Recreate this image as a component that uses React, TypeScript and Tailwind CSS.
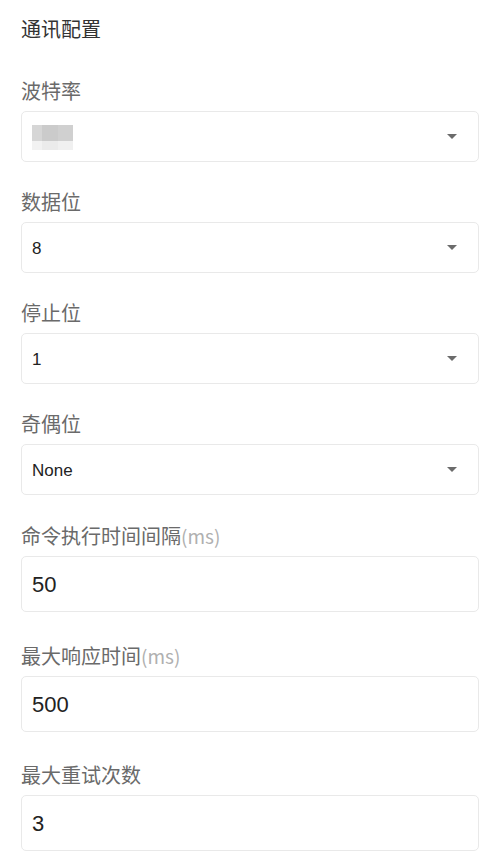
import { ReactNode } from 'react';

const cjk = { fontFamily: '"Noto Sans CJK SC", "Noto Sans", sans-serif' };
const latin = { fontFamily: '"Liberation Sans", "Noto Sans CJK SC", sans-serif' };

function Caret() {
    return (
        <svg width="10" height="5" viewBox="0 0 10 5" className="shrink-0">
            <path d="M0 0 L10 0 L5 5 Z" fill="#6b6b6b" />
        </svg>
    );
}

function Label({ text, unit }: { text: string; unit?: string }) {
    return (
        <div className="text-[20px] leading-[28px] text-[#6a6a6a]" style={cjk}>
            {text}
            {unit && <span className="text-[19px] text-[#b0b0b0]">{unit}</span>}
        </div>
    );
}

function SelectField({ label, children, first }: { label: string; children: ReactNode; first?: boolean }) {
    return (
        <div className={first ? 'mt-[34px]' : 'mt-[26px]'}>
            <Label text={label} />
            <div className="mt-[6px] h-[51px] flex items-center justify-between pl-[10px] pr-[21px] border border-[#e9e9e9] rounded-[5px] bg-white">
                <div className="text-[17px] text-[#222] pt-[2px]" style={latin}>{children}</div>
                <Caret />
            </div>
        </div>
    );
}

function InputField({ label, unit, value, gap }: { label: string; unit?: string; value: string; gap: string }) {
    return (
        <div className={gap}>
            <Label text={label} unit={unit} />
            <div className="mt-[6px] h-[56px] flex items-center pl-[10px] border border-[#e9e9e9] rounded-[5px] bg-white">
                <span className="text-[22px] text-[#222]" style={latin}>{value}</span>
            </div>
        </div>
    );
}

// mosaic where the baud rate value was blurred out
function Blurred() {
    return (
        <div className="flex flex-col">
            <div className="flex h-[16px]">
                <div className="w-[10px] bg-[#d6d6d6]" />
                <div className="w-[16px] bg-[#cbcbcb]" />
                <div className="w-[15px] bg-[#d0d0d0]" />
            </div>
            <div className="flex h-[9px]">
                <div className="w-[10px] bg-[#f2f2f2]" />
                <div className="w-[16px] bg-[#ebebeb]" />
                <div className="w-[15px] bg-[#f0f0f0]" />
            </div>
        </div>
    );
}

export default function App() {
    return (
        <div className="min-h-screen w-full bg-white pl-[21px] pr-[14px] pt-[15px] pb-4">
            <div className="text-[20px] leading-[28px] text-[#333]" style={cjk}>通讯配置</div>

            <SelectField label="波特率" first>
                <Blurred />
            </SelectField>
            <SelectField label="数据位">8</SelectField>
            <SelectField label="停止位">1</SelectField>
            <SelectField label="奇偶位">None</SelectField>

            <InputField label="命令执行时间间隔" unit="(ms)" value="50" gap="mt-[27px]" />
            <InputField label="最大响应时间" unit="(ms)" value="500" gap="mt-[30px]" />
            <InputField label="最大重试次数" value="3" gap="mt-[29px]" />
        </div>
    );
}
